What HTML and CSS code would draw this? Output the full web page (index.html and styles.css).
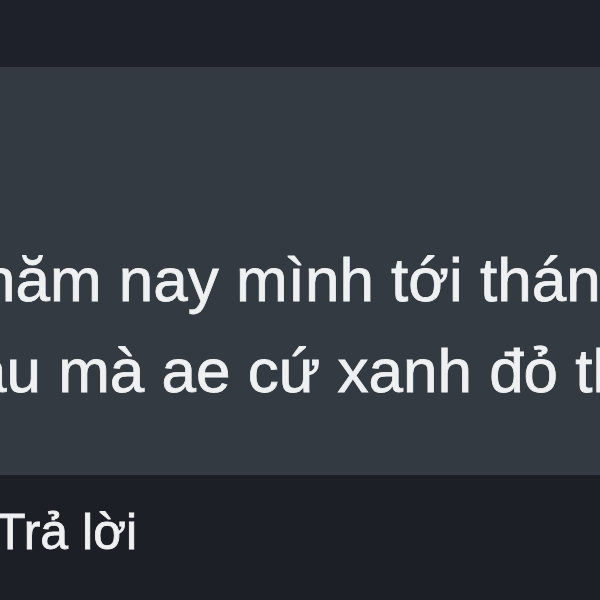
FILE: index.html
```html
<!DOCTYPE html>
<html lang="vi">
<head>
    <meta charset="UTF-8">
    <meta name="viewport" content="width=device-width, initial-scale=1.0">
    <title>Bình luận</title>
    <link rel="stylesheet" href="styles.css">
</head>

<body>
    <div class="thanhTren"></div>

    <div class="binhLuan">
        <p class="noiDung">
            <span class="dong dong1">năm nay mình tới tháng</span>
            <span class="dong dong2">âu mà ae cứ xanh đỏ thế</span>
        </p>
    </div>

    <div class="thanhDuoi">
        <span class="traLoi">Trả lời</span>
    </div>
</body>

</html>
```

FILE: styles.css
```css
body {
    margin: 0;
    width: 600px;
    height: 600px;
    overflow: hidden;
    background-color: #1c1f26;
    font-family: "Liberation Sans", Arial, sans-serif;
    color: #eef0f2;
}

.thanhTren {
    height: 67px;
    background-color: #1e2129;
}

.binhLuan {
    height: 408px;
    background-color: #343a42;
    padding-top: 167px;
    box-sizing: border-box;
    overflow: hidden;
}

.noiDung {
    margin: 0;
    font-size: 62px;
    line-height: 91px;
    white-space: nowrap;
    -webkit-text-stroke: 0.8px #eef0f2;
}

.dong {
    display: block;
}

.dong1 {
    margin-left: -19px;
}

.dong2 {
    margin-left: -28px;
}

.thanhDuoi {
    height: 125px;
    background-color: #1c1f26;
    padding-top: 29px;
    box-sizing: border-box;
}

.traLoi {
    display: block;
    font-size: 50px;
    line-height: 56px;
    margin-left: -5px;
    -webkit-text-stroke: 0.8px #eef0f2;
}
```
